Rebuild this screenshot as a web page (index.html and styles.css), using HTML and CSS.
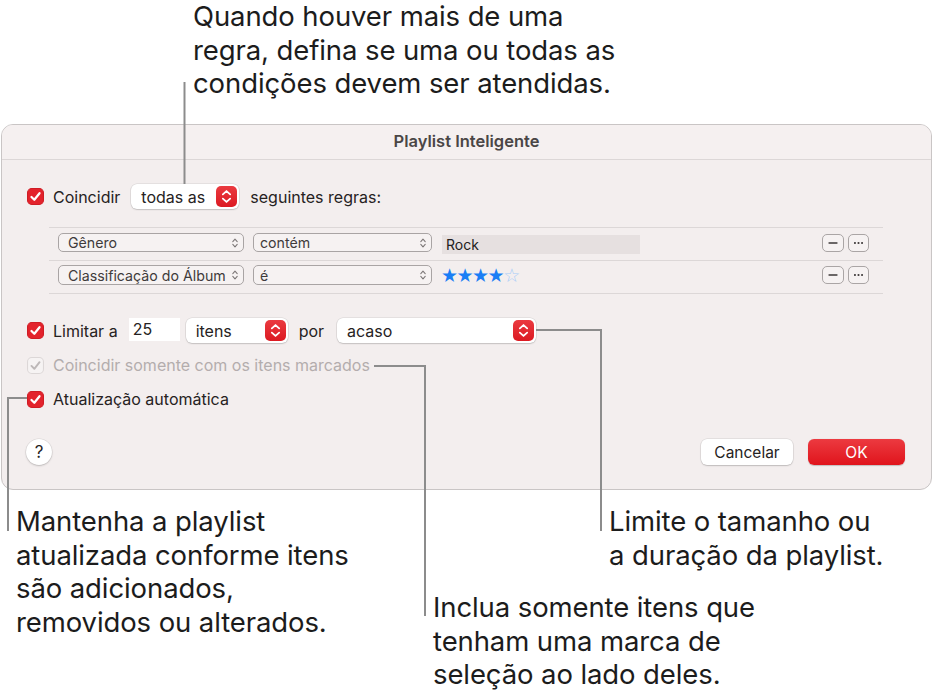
FILE: index.html
```html
<!DOCTYPE html>
<html lang="pt-BR">
<head>
<meta charset="utf-8">
<title>Playlist Inteligente</title>
<link rel="stylesheet" href="styles.css">
</head>
<body>
<div class="page">
  <p class="note note-top">Quando houver mais de uma<br>regra, defina se uma ou todas as<br>condições devem ser atendidas.</p>

  <div class="dialog">
    <div class="titlebar">Playlist Inteligente</div>
    <div class="content">
      <div class="row row-match">
        <span class="cb"><svg viewBox="0 0 16 16"><rect x="0.5" y="0.5" width="15" height="15" rx="4" class="cb-box"/><path d="M4.2 8.4 L6.9 11.1 L11.8 4.9" class="cb-check"/></svg></span>
        <span class="label">Coincidir</span>
        <span class="popup popup-todas"><span class="ptext">todas as</span><span class="stepper"><svg viewBox="0 0 20 20"><path d="M6.5 8 L10 4.8 L13.5 8 M6.5 12 L10 15.2 L13.5 12"/></svg></span></span>
        <span class="label">seguintes regras:</span>
      </div>

      <div class="rules">
        <div class="rule">
          <span class="sel sel-field">Gênero<svg class="chev" viewBox="0 0 6 10"><path d="M0.8 3.6 L3 1.2 L5.2 3.6 M0.8 6.4 L3 8.8 L5.2 6.4"/></svg></span>
          <span class="sel sel-op">contém<svg class="chev" viewBox="0 0 6 10"><path d="M0.8 3.6 L3 1.2 L5.2 3.6 M0.8 6.4 L3 8.8 L5.2 6.4"/></svg></span>
          <span class="tfield">Rock</span>
          <span class="spacer"></span>
          <span class="sbtn"><svg viewBox="0 0 22 18"><path d="M6 9 H16" class="minus"/></svg></span>
          <span class="sbtn sbtn-dots"><svg viewBox="0 0 21 18"><circle cx="6.5" cy="9" r="1.2"/><circle cx="10.5" cy="9" r="1.2"/><circle cx="14.5" cy="9" r="1.2"/></svg></span>
        </div>
        <div class="rule">
          <span class="sel sel-field">Classificação do Álbum<svg class="chev" viewBox="0 0 6 10"><path d="M0.8 3.6 L3 1.2 L5.2 3.6 M0.8 6.4 L3 8.8 L5.2 6.4"/></svg></span>
          <span class="sel sel-op">é<svg class="chev" viewBox="0 0 6 10"><path d="M0.8 3.6 L3 1.2 L5.2 3.6 M0.8 6.4 L3 8.8 L5.2 6.4"/></svg></span>
          <span class="stars"><span class="star-on">★★★★</span><span class="star-off">☆</span></span>
          <span class="spacer"></span>
          <span class="sbtn"><svg viewBox="0 0 22 18"><path d="M6 9 H16" class="minus"/></svg></span>
          <span class="sbtn sbtn-dots"><svg viewBox="0 0 21 18"><circle cx="6.5" cy="9" r="1.2"/><circle cx="10.5" cy="9" r="1.2"/><circle cx="14.5" cy="9" r="1.2"/></svg></span>
        </div>
      </div>

      <div class="row row-limit">
        <span class="cb"><svg viewBox="0 0 16 16"><rect x="0.5" y="0.5" width="15" height="15" rx="4" class="cb-box"/><path d="M4.2 8.4 L6.9 11.1 L11.8 4.9" class="cb-check"/></svg></span>
        <span class="label">Limitar a</span>
        <span class="num">25</span>
        <span class="popup popup-itens"><span class="ptext">itens</span><span class="stepper"><svg viewBox="0 0 20 20"><path d="M6.5 8 L10 4.8 L13.5 8 M6.5 12 L10 15.2 L13.5 12"/></svg></span></span>
        <span class="label label-por">por</span>
        <span class="popup popup-acaso"><span class="ptext">acaso</span><span class="stepper"><svg viewBox="0 0 20 20"><path d="M6.5 8 L10 4.8 L13.5 8 M6.5 12 L10 15.2 L13.5 12"/></svg></span></span>
      </div>

      <div class="row row-checked">
        <span class="cb cb-off"><svg viewBox="0 0 16 16"><rect x="0.5" y="0.5" width="15" height="15" rx="4" class="cb-box-off"/><path d="M4.2 8.4 L6.9 11.1 L11.8 4.9" class="cb-check-off"/></svg></span>
        <span class="label label-disabled">Coincidir somente com os itens marcados</span>
      </div>

      <div class="row row-auto">
        <span class="cb"><svg viewBox="0 0 16 16"><rect x="0.5" y="0.5" width="15" height="15" rx="4" class="cb-box"/><path d="M4.2 8.4 L6.9 11.1 L11.8 4.9" class="cb-check"/></svg></span>
        <span class="label">Atualização automática</span>
      </div>

      <div class="row row-buttons">
        <span class="help">?</span>
        <span class="spacer"></span>
        <span class="btn btn-cancel">Cancelar</span>
        <span class="btn btn-ok">OK</span>
      </div>
    </div>
  </div>

  <div class="notes-bottom">
    <p class="note note-auto">Mantenha a playlist<br>atualizada conforme itens<br>são adicionados,<br>removidos ou alterados.</p>
    <p class="note note-limit">Limite o tamanho ou<br>a duração da playlist.</p>
    <p class="note note-checked">Inclua somente itens que<br>tenham uma marca de<br>seleção ao lado deles.</p>
  </div>

  <svg class="leaders" viewBox="0 0 934 697">
    <path d="M184.5 82 V184"/>
    <path d="M536 330 H601 V531"/>
    <path d="M374 366 H425 V616"/>
    <path d="M27 398 H8 V531"/>
  </svg>
</div>
</body>
</html>
```

FILE: styles.css
```css
* { box-sizing: border-box; }

html, body {
  margin: 0;
  padding: 0;
  background: #ffffff;
}

body {
  font-family: Inter, "Noto Sans", "Liberation Sans", sans-serif;
  color: #262222;
}

.page {
  position: relative;
  width: 934px;
  height: 697px;
  overflow: hidden;
}

.note {
  margin: 0;
  font-family: Inter, "Liberation Sans", sans-serif;
  font-size: 27.5px;
  line-height: 33.5px;
  color: #1c1c1c;
  letter-spacing: -0.1px;
}

.note-top {
  height: 124px;
  padding-left: 193px;
  padding-top: 0;
}

/* Dialog */
.dialog {
  margin-left: 1px;
  width: 931px;
  height: 366px;
  background: #f3eeee;
  border: 1px solid #c9c5c5;
  border-radius: 12px;
  overflow: hidden;
}

.titlebar {
  height: 35px;
  border-bottom: 1px solid #dcd7d7;
  background: #f5f0f0;
  text-align: center;
  font-size: 16.5px;
  font-weight: 600;
  line-height: 33px;
  color: #4a4646;
}

.content {
  padding: 0 26px 0 25px;
  display: flex;
  flex-direction: column;
}

.row {
  display: flex;
  align-items: center;
}

.label {
  font-size: 16px;
  color: #262222;
  white-space: nowrap;
}

.cb {
  width: 17px;
  height: 17px;
  flex: none;
  margin-right: 9px;
  display: flex;
}

.cb svg { width: 17px; height: 17px; }
.cb-box { fill: #e3232c; stroke: #cf1c24; stroke-width: 1; }
.cb-check { fill: none; stroke: #ffffff; stroke-width: 2.1; stroke-linecap: round; stroke-linejoin: round; }
.cb-box-off { fill: #f6f3f3; stroke: #dcd7d7; stroke-width: 1; }
.cb-check-off { fill: none; stroke: #bdb8b8; stroke-width: 1.8; stroke-linecap: round; stroke-linejoin: round; }

.row-match {
  margin-top: 24px;
  height: 25px;
}

.popup {
  height: 25px;
  background: #ffffff;
  border-radius: 6px;
  box-shadow: 0 0 0 0.5px rgba(0, 0, 0, 0.12), 0 1px 1.5px rgba(0, 0, 0, 0.14);
  display: flex;
  align-items: center;
  padding-left: 10px;
  padding-right: 2px;
  font-size: 16px;
  color: #262222;
}

.ptext { flex: 1; white-space: nowrap; }

.stepper {
  width: 21px;
  height: 21px;
  border-radius: 5px;
  background: linear-gradient(#ea3a40, #dc1a22);
  display: flex;
  flex: none;
}

.stepper svg { width: 21px; height: 21px; }
.stepper path { fill: none; stroke: #ffffff; stroke-width: 1.7; stroke-linecap: round; stroke-linejoin: round; }

.popup-todas { width: 108px; margin-left: 11px; margin-right: 11px; }

/* Rules */
.rules {
  margin-top: 18px;
  margin-left: 22px;
  margin-right: 22px;
  border-top: 1px solid #dcd7d7;
}

.rule {
  height: 33px;
  border-bottom: 1px solid #dcd7d7;
  display: flex;
  align-items: flex-start;
  padding-top: 5px;
  padding-left: 9px;
  padding-right: 14px;
}

.rule + .rule { padding-top: 4px; }

.sel {
  height: 19px;
  border: 1px solid #a9a4a4;
  border-radius: 5px;
  background: #f6f2f2;
  display: flex;
  align-items: center;
  justify-content: space-between;
  padding-left: 9px;
  padding-right: 5px;
  font-size: 14.2px;
  color: #3f3b3b;
  white-space: nowrap;
}

.rule + .rule .sel { height: 20px; }

.chev { width: 6px; height: 10px; flex: none; }
.chev path { fill: none; stroke: #7d7878; stroke-width: 1.1; stroke-linecap: round; stroke-linejoin: round; }

.sel-field { width: 186px; }
.sel-op { width: 179px; margin-left: 9px; padding-left: 6px; }

.tfield {
  width: 198px;
  height: 19px;
  margin-left: 10px;
  margin-top: 2px;
  background: #e6e0e0;
  font-size: 14px;
  line-height: 19px;
  padding-left: 4px;
  color: #222020;
}

.stars {
  margin-left: 9px;
  font-size: 19px;
  line-height: 20px;
  letter-spacing: -1.5px;
  font-family: "DejaVu Sans", sans-serif;
}

.star-on { color: #1a7ef5; }
.star-off { color: #a8cdf8; }

.spacer { flex: 1; }

.sbtn {
  width: 22px;
  height: 18px;
  margin-top: 1px;
  border: 1px solid #aaa5a5;
  border-radius: 5px;
  background: #f6f2f2;
  display: flex;
  flex: none;
}

.sbtn svg { width: 100%; height: 100%; }
.minus { stroke: #3c3838; stroke-width: 1.6; }
.sbtn-dots { width: 21px; margin-left: 4px; }
.sbtn-dots circle { fill: #3c3838; }

/* Limit row */
.row-limit {
  margin-top: 24px;
  height: 25px;
}

.num {
  width: 51px;
  height: 23px;
  margin-left: 11px;
  margin-top: -2px;
  background: #ffffff;
  font-size: 16px;
  line-height: 23px;
  padding-left: 4px;
  color: #262222;
}

.popup-itens { width: 102px; margin-left: 6px; }
.label-por { margin-left: 11px; }
.popup-acaso { width: 199px; margin-left: 13px; }

.row-checked {
  margin-top: 12px;
  height: 20px;
}

.label-disabled { color: #b3adad; }

.row-auto {
  margin-top: 14px;
  height: 20px;
}

/* Buttons */
.row-buttons {
  margin-top: 30px;
  height: 26px;
  padding-right: 0;
}

.help {
  width: 26px;
  height: 26px;
  border-radius: 50%;
  background: #ffffff;
  box-shadow: 0 0 0 0.5px rgba(0, 0, 0, 0.1), 0 1px 2px rgba(0, 0, 0, 0.18);
  display: flex;
  align-items: center;
  justify-content: center;
  font-size: 17px;
  color: #262222;
  margin-left: -1px;
}

.btn {
  height: 26px;
  border-radius: 6px;
  display: flex;
  align-items: center;
  justify-content: center;
  font-size: 15.5px;
}

.btn-cancel {
  width: 92px;
  background: #ffffff;
  color: #262222;
  box-shadow: 0 0 0 0.5px rgba(0, 0, 0, 0.12), 0 1px 1.5px rgba(0, 0, 0, 0.16);
}

.btn-ok {
  width: 97px;
  margin-left: 15px;
  background: linear-gradient(#ec3a40, #e0141c);
  color: #ffffff;
  box-shadow: 0 0.5px 1px rgba(0, 0, 0, 0.2);
}

/* Bottom notes */
.notes-bottom {
  display: grid;
  grid-template-columns: 417px 176px 1fr;
  grid-template-rows: 86px auto;
  padding-left: 16px;
  padding-top: 15px;
}

.note-auto { grid-column: 1; grid-row: 1 / 3; }
.note-limit { grid-column: 3; grid-row: 1; }
.note-checked { grid-column: 2 / 4; grid-row: 2; }

.leaders {
  position: absolute;
  left: 0;
  top: 0;
  width: 934px;
  height: 697px;
  pointer-events: none;
}

.leaders path {
  fill: none;
  stroke: #8c8c8c;
  stroke-width: 2;
}
```
